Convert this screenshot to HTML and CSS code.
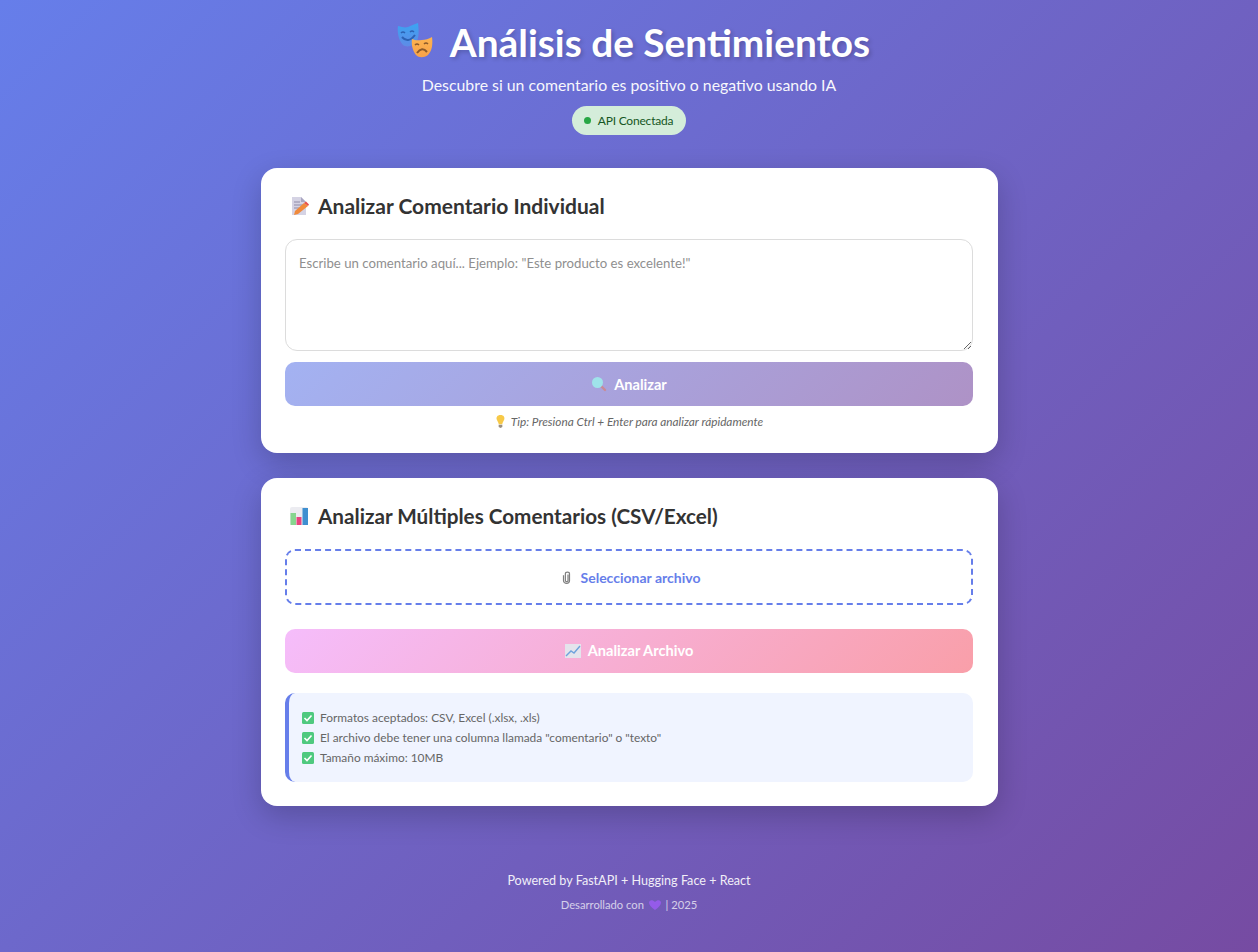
FILE: index.html
```html
<!doctype html>
<html lang="es">
	<head>
		<meta charset="utf-8">
		<title>Análisis de Sentimientos</title>
		<link rel="stylesheet" href="styles.css">
	</head>
	<body>
		<div class="app">
			<header class="header">
				<h1 class="title">
					<svg class="icon-masks" viewBox="0 0 40 40">
						<defs>
							<linearGradient id="maskBlue" x1="0" y1="0" x2="0" y2="1">
								<stop offset="0" stop-color="#3aa4f2"/>
								<stop offset="1" stop-color="#5f8be6"/>
							</linearGradient>
							<linearGradient id="maskOrange" x1="0" y1="0" x2="0" y2="1">
								<stop offset="0" stop-color="#fdb44f"/>
								<stop offset="1" stop-color="#f8a24a"/>
							</linearGradient>
						</defs>
						<path d="M4 4 C8 5 11 6 14 5 C17 4 20 2 24 1 C25 8 25 15 23 19 C20 24 13 26 9 23 C5 19 3 11 4 4 Z" fill="url(#maskBlue)"/>
						<path d="M7 11 Q9 9 11 11 M16 10 Q18 8 20 10" stroke="#2c62b4" stroke-width="1.5" fill="none"/>
						<path d="M8 15 Q14 22 21 13" stroke="#2c62b4" stroke-width="2" fill="none"/>
						<path d="M18 17 C22 19 25 18 28 18 C31 18 35 17 38 15 C39 22 38 29 34 33 C30 36 25 36 22 33 C19 29 17 23 18 17 Z" fill="url(#maskOrange)"/>
						<path d="M21 23 Q23 21 25 23 M30 22 Q32 20 34 22" stroke="#8c5a2a" stroke-width="1.5" fill="none"/>
						<path d="M23 31 Q28 24 33 30" stroke="#8c5a2a" stroke-width="2" fill="none"/>
					</svg>
					<span>Análisis de Sentimientos</span>
				</h1>
				<p class="subtitle">Descubre si un comentario es positivo o negativo usando IA</p>
				<div class="status"><span class="status-dot"></span>API Conectada</div>
			</header>

			<section class="card card-single">
				<h2 class="card-title">
					<svg class="icon-title" viewBox="0 0 20 20">
						<path d="M3 1 H12 L17 6 V19 H3 Z" fill="#d5d3e4"/>
						<path d="M12 1 L17 6 H12 Z" fill="#a9a6c2"/>
						<path d="M5 6 H11 M5 9 H14 M5 12 H10" stroke="#8f8ba8" stroke-width="1"/>
						<path d="M6 15 L15 7 L19 10 L9 18 L5 19 Z" fill="#f08a3c"/>
						<path d="M15 7 L17 5.5 L20 8.5 L19 10 Z" fill="#e8504a"/>
					</svg>
					Analizar Comentario Individual
				</h2>
				<textarea class="comment" placeholder="Escribe un comentario aquí... Ejemplo: &quot;Este producto es excelente!&quot;"></textarea>
				<button class="btn btn-analyze">
					<svg class="icon-btn" viewBox="0 0 16 16">
						<path d="M10 10 L14 14" stroke="#c98a96" stroke-width="2.4" stroke-linecap="round"/>
						<circle cx="6.5" cy="6.5" r="5.5" fill="#9fe3ea"/>
					</svg>
					Analizar
				</button>
				<p class="tip">
					<svg class="icon-tip" viewBox="0 0 12 14">
						<path d="M6 0 C9.5 0 11 2.5 10 5 C9.4 6.6 8 8 8 10 H4 C4 8 2.6 6.6 2 5 C1 2.5 2.5 0 6 0 Z" fill="#f7c948"/>
						<path d="M4 10.5 H8 V13 L6 14 L4 13 Z" fill="#9a8f80"/>
					</svg>
					Tip: Presiona Ctrl + Enter para analizar rápidamente
				</p>
			</section>

			<section class="card">
				<h2 class="card-title card-title-long">
					<svg class="icon-title" viewBox="0 0 20 20">
						<rect x="1" y="1" width="18" height="18" rx="2" fill="#ececf1"/>
						<rect x="1.5" y="7" width="5.5" height="12" fill="#86d68f"/>
						<rect x="7.5" y="11" width="5" height="8" fill="#e8447e"/>
						<rect x="13.5" y="2" width="5.5" height="17" fill="#3f8fd0"/>
					</svg>
					Analizar Múltiples Comentarios (CSV/Excel)
				</h2>
				<label class="file-select">
					<svg class="icon-clip" viewBox="0 0 12 18">
						<path d="M8 5 V13 C8 15 4.5 15 4.5 13 V4 C4.5 1 10 1 10 4 V13 C10 18 2 18 2 13 V6" fill="none" stroke="#7f7f7f" stroke-width="1.6"/>
					</svg>
					Seleccionar archivo
				</label>
				<button class="btn btn-file">
					<svg class="icon-btn" viewBox="0 0 16 16">
						<rect x="0" y="1" width="16" height="14" fill="#e4e4ec"/>
						<path d="M1 13 L6 8 L9 10 L15 3" fill="none" stroke="#6fa3dc" stroke-width="1.4"/>
					</svg>
					Analizar Archivo
				</button>
				<div class="file-info">
					<p class="file-line"><svg class="icon-check" viewBox="0 0 12 12"><rect width="12" height="12" rx="1.5" fill="#4fc97f"/><path d="M2.5 6 L5 8.5 L9.5 3.5" fill="none" stroke="#fff" stroke-width="1.6"/></svg>Formatos aceptados: CSV, Excel (.xlsx, .xls)</p>
					<p class="file-line"><svg class="icon-check" viewBox="0 0 12 12"><rect width="12" height="12" rx="1.5" fill="#4fc97f"/><path d="M2.5 6 L5 8.5 L9.5 3.5" fill="none" stroke="#fff" stroke-width="1.6"/></svg>El archivo debe tener una columna llamada "comentario" o "texto"</p>
					<p class="file-line"><svg class="icon-check" viewBox="0 0 12 12"><rect width="12" height="12" rx="1.5" fill="#4fc97f"/><path d="M2.5 6 L5 8.5 L9.5 3.5" fill="none" stroke="#fff" stroke-width="1.6"/></svg>Tamaño máximo: 10MB</p>
				</div>
			</section>

			<footer class="footer">
				<p class="footer-main">Powered by FastAPI + Hugging Face + React</p>
				<p class="footer-sub">Desarrollado con
					<svg class="icon-heart" viewBox="0 0 12 12"><path d="M6 11 C2 8 0 6 0 3.5 C0 1 3.5 0 6 3 C8.5 0 12 1 12 3.5 C12 6 10 8 6 11 Z" fill="#a45cff"/></svg>
					| 2025</p>
			</footer>
		</div>
	</body>
</html>
```

FILE: styles.css
```css
*
{
	box-sizing: border-box;
}

body
{
	margin: 0;
	min-height: 100vh;
	font-family: Lato, "Open Sans", sans-serif;
	background: linear-gradient(135deg, #667eea 0%, #764ba2 100%);
	color: #333333;
}

p, h1, h2
{
	margin: 0;
}

.app
{
	width: 737px;
	margin: 0 auto;
	padding-top: 19px;
}

.header
{
	display: flex;
	flex-direction: column;
	align-items: center;
	color: #ffffff;
	margin-bottom: 33px;
}

.title
{
	display: flex;
	align-items: center;
	gap: 16px;
	padding-left: 6px;
	font-size: 38.8px;
	line-height: 46px;
	font-weight: 700;
	text-shadow: 2px 2px 4px rgba(0, 0, 0, 0.2);
}

.icon-masks
{
	width: 40px;
	height: 40px;
}

.subtitle
{
	font-size: 15.85px;
	line-height: 22px;
	margin-top: 9px;
	opacity: 0.95;
}

.status
{
	display: flex;
	align-items: center;
	gap: 7px;
	height: 29px;
	margin-top: 10px;
	padding: 0 13px 0 12px;
	border-radius: 15px;
	background-color: #d4edda;
	color: #155724;
	font-size: 12px;
	letter-spacing: -0.2px;
}

.status-dot
{
	width: 7px;
	height: 7px;
	border-radius: 50%;
	background-color: #28a745;
}

.card
{
	background-color: #ffffff;
	border-radius: 16px;
	padding: 24px 24.5px;
	margin-bottom: 24px;
	box-shadow: 0 10px 30px rgba(0, 0, 0, 0.2);
}

.card-single
{
	margin-bottom: 24.5px;
}

.card-title
{
	display: flex;
	align-items: center;
	gap: 9px;
	font-size: 21px;
	line-height: 28px;
	font-weight: 700;
	color: #333333;
	margin-bottom: 19px;
}

.card-title-long
{
	font-size: 20.7px;
}

.icon-title
{
	width: 20px;
	height: 20px;
	margin-left: 4px;
}

.comment
{
	display: block;
	width: 100%;
	height: 112px;
	padding: 15px 13px;
	border: 1.5px solid #dcdcdc;
	border-radius: 12px;
	font-family: inherit;
	font-size: 13.2px;
	resize: vertical;
}

.comment::placeholder
{
	color: #8f8f8f;
}

.btn
{
	display: flex;
	align-items: center;
	justify-content: center;
	gap: 7px;
	width: 100%;
	height: 44px;
	border: none;
	border-radius: 10px;
	color: #ffffff;
	font-family: inherit;
	font-size: 14.6px;
	font-weight: 700;
}

.btn-analyze
{
	margin-top: 11px;
	background: linear-gradient(135deg, #a3b2f2, #ae92c6);
}

.icon-btn
{
	width: 16px;
	height: 16px;
}

.tip
{
	display: flex;
	align-items: center;
	justify-content: center;
	gap: 5px;
	margin-top: 8px;
	font-size: 11.8px;
	line-height: 15px;
	font-style: italic;
	color: #666666;
}

.icon-tip
{
	width: 11px;
	height: 13px;
}

.file-select
{
	display: flex;
	align-items: center;
	justify-content: center;
	gap: 10px;
	height: 56px;
	padding: 1px 0 0 4px;
	border: 2px dashed #667eea;
	border-radius: 10px;
	color: #667eea;
	font-size: 14px;
	font-weight: 700;
}

.icon-clip
{
	width: 9px;
	height: 15px;
}

.btn-file
{
	margin-top: 24px;
	background: linear-gradient(135deg, #f5bdfb, #f99fa9);
}

.file-info
{
	margin-top: 20px;
	padding: 15px 13px 14px;
	background-color: #f0f4ff;
	border-left: 4px solid #667eea;
	border-radius: 10px;
}

.file-line
{
	display: flex;
	align-items: center;
	gap: 6px;
	font-size: 11.9px;
	line-height: 20px;
	color: #666666;
}

.icon-check
{
	width: 12px;
	height: 12px;
}

.footer
{
	margin-top: 65.5px;
	padding-bottom: 32px;
	text-align: center;
	color: #ffffff;
}

.footer-main
{
	font-size: 12.6px;
	line-height: 20px;
	opacity: 0.9;
}

.footer-sub
{
	margin-top: 4px;
	font-size: 11.2px;
	line-height: 20px;
	opacity: 0.7;
}

.icon-heart
{
	width: 12px;
	height: 12px;
	margin: 0 2px;
	vertical-align: -2px;
}
```
